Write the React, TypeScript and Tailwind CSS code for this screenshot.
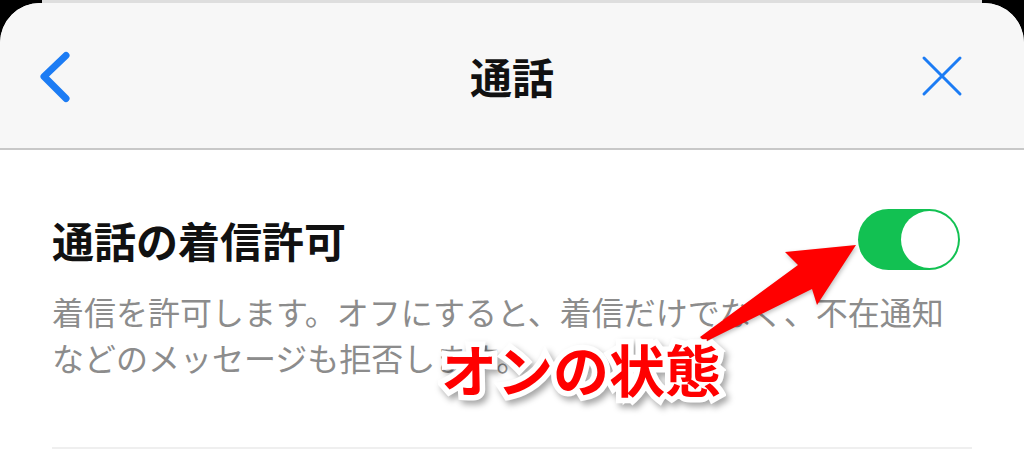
const jp = "font-['Noto_Sans_CJK_JP','Noto_Sans',sans-serif]";

function BackIcon() {
  return (
    <svg width="36" height="56" viewBox="0 0 36 56" className="ml-[36px]">
      <polyline
        points="30,7.5 8,28.5 30,50.5"
        fill="none"
        stroke="#1c7cf4"
        strokeWidth="7"
        strokeLinecap="round"
        strokeLinejoin="round"
      />
    </svg>
  );
}

function CloseIcon() {
  return (
    <svg width="48" height="48" viewBox="0 0 48 48" className="mr-[58px] justify-self-end">
      <path d="M6 6 L42 42 M42 6 L6 42" stroke="#1c7cf4" strokeWidth="3" strokeLinecap="round" />
    </svg>
  );
}

function Toggle() {
  return (
    <div className="flex h-[61px] w-[102px] shrink-0 items-center justify-end rounded-full bg-[#12c152] p-[2px] mr-[12px]">
      <div className="h-[57px] w-[57px] rounded-full bg-white" />
    </div>
  );
}

function Annotation() {
  const base = `${jp} col-start-1 row-start-1 text-[56px] leading-none font-bold whitespace-nowrap`;
  return (
    <>
      <svg
        width="180"
        height="120"
        viewBox="0 0 180 120"
        className="absolute left-[690px] top-[235px] drop-shadow-[1px_2px_2px_rgba(0,0,0,0.25)]"
      >
        <polygon
          points="10,102 108,30 95,17 166,10 127,70 122,54 15,107"
          fill="#ff0000"
          strokeLinejoin="round"
        />
      </svg>
      <div className="absolute left-[441px] top-[340px] grid">
        <span
          className={`${base} text-white [-webkit-text-stroke:11px_white] drop-shadow-[3px_4px_3px_rgba(0,0,0,0.35)]`}
        >
          オンの状態
        </span>
        <span className={`${base} relative z-10 text-[#ff0000]`}>オンの状態</span>
      </div>
    </>
  );
}

export default function App() {
  return (
    <div className="relative h-[449px] w-[1024px] overflow-hidden bg-black">
      <div className="mx-[42px] h-[3px] bg-[#dedede]" />
      <div className="h-[446px] overflow-hidden rounded-t-[40px] bg-white">
        <header className="grid h-[147px] grid-cols-[1fr_auto_1fr] items-center border-b-2 border-[#c8c8c8] bg-[#f7f7f7]">
          <BackIcon />
          <h1 className={`${jp} text-[42px] leading-[50px] font-bold text-[#111]`}>通話</h1>
          <CloseIcon />
        </header>

        <section className="px-[52px] pt-[59px]">
          <div className="flex items-center justify-between">
            <h2 className={`${jp} text-[42px] leading-[50px] font-bold text-[#111]`}>通話の着信許可</h2>
            <Toggle />
          </div>
          <p className={`${jp} mt-[18px] text-[32px] leading-[46px] text-[#8c8c8c]`}>
            着信を許可します。オフにすると、着信だけでなく、不在通知などのメッセージも拒否します。
          </p>
          <div className="mt-[67px] h-[2px] bg-[#efefef]" />
        </section>
      </div>

      <Annotation />
    </div>
  );
}
